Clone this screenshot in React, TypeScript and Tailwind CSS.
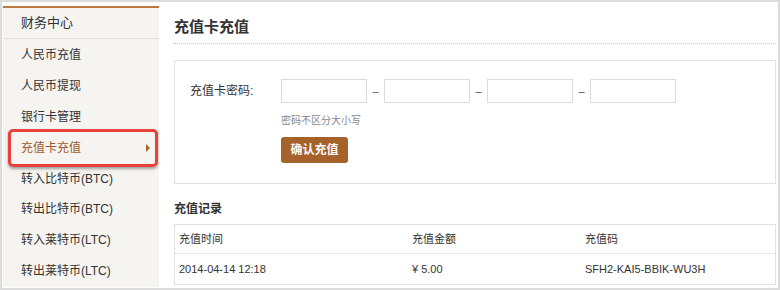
const MENU = [
  "人民币充值",
  "人民币提现",
  "银行卡管理",
  "充值卡充值",
  "转入比特币(BTC)",
  "转出比特币(BTC)",
  "转入莱特币(LTC)",
  "转出莱特币(LTC)",
];

const ACTIVE = "充值卡充值";

function Sidebar() {
  return (
    <aside className="w-[156px] shrink-0 mt-[3px] border-t-2 border-[#b9783f] bg-[#f6f4f0]">
      <div className="h-[31px] flex items-center px-[18px] text-[13px] text-[#333] border-b border-[#e3ded6]">
        财务中心
      </div>
      <nav className="pt-[1px]">
        {MENU.map((m) => {
          const active = m === ACTIVE;
          return (
            <div
              key={m}
              className={`relative h-[30.8px] flex items-center pl-[18px] pr-[9px] text-[12px] ${
                active ? "text-[#9b5a2c]" : "text-[#333]"
              }`}
            >
              {m}
              {active && (
                <>
                  <span className="ml-auto w-0 h-0 border-y-[4px] border-y-transparent border-l-[4px] border-l-[#a8662f]" />
                  {/* red annotation frame over the active entry */}
                  <span className="absolute left-[5px] right-[1px] top-[-3px] bottom-[-4px] rounded-[5px] border-[3px] border-[#e8403a] shadow-[0_2px_3px_rgba(0,0,0,0.35)]" />
                </>
              )}
            </div>
          );
        })}
      </nav>
    </aside>
  );
}

function CardInput() {
  return <input className="w-[86px] h-[24px] border border-[#dcdcdc] bg-white outline-none" />;
}

function RechargeForm() {
  return (
    <div className="border border-[#e1e1e1] pt-[18px] pb-[20px] px-[15px]">
      <div className="flex items-center">
        <span className="w-[91px] text-[12px] text-[#333]">充值卡密码:</span>
        {[0, 1, 2, 3].map((i) => (
          <div key={i} className="flex items-center">
            {i > 0 && <span className="w-[17px] text-center text-[11px] text-[#555]">–</span>}
            <CardInput />
          </div>
        ))}
      </div>
      <div className="ml-[91px] mt-[10px] text-[10px] text-[#888]">密码不区分大小写</div>
      <button className="ml-[91px] mt-[9px] w-[67px] h-[26px] rounded-[3px] bg-[#a5622a] text-white text-[12px] font-bold">
        确认充值
      </button>
    </div>
  );
}

function Records() {
  return (
    <div className="border border-[#e1e1e1] text-[11px] text-[#333]">
      <div className="h-[28px] flex items-center border-b border-dotted border-[#cfcfcf] px-[4px] mt-[1px]">
        <span className="w-[233px]">充值时间</span>
        <span className="w-[173px]">充值金额</span>
        <span>充值码</span>
      </div>
      <div className="h-[30px] flex items-center px-[4px]">
        <span className="w-[233px]">2014-04-14 12:18</span>
        <span className="w-[173px]">¥ 5.00</span>
        <span>SFH2-KAI5-BBIK-WU3H</span>
      </div>
    </div>
  );
}

export default function App() {
  return (
    <div
      className="w-[780px] h-[290px] border-2 border-[#dcdcdc] bg-white flex overflow-hidden p-[1px]"
      style={{ fontFamily: '"Liberation Sans", Arial, "Noto Sans CJK SC", sans-serif' }}
    >
      <Sidebar />
      <main className="flex-1 min-w-0 pl-[15px] pr-[1px]">
        <h1 className="mt-[13px] h-[22px] text-[15px] font-bold text-[#333] leading-[22px]">充值卡充值</h1>
        <div className="mt-[5px] border-b border-dotted border-[#c8c8c8]" />
        <div className="mt-[16px]">
          <RechargeForm />
        </div>
        <h2 className="mt-[17px] text-[12px] font-bold text-[#333] leading-[16px]">充值记录</h2>
        <div className="mt-[7px]">
          <Records />
        </div>
      </main>
    </div>
  );
}
